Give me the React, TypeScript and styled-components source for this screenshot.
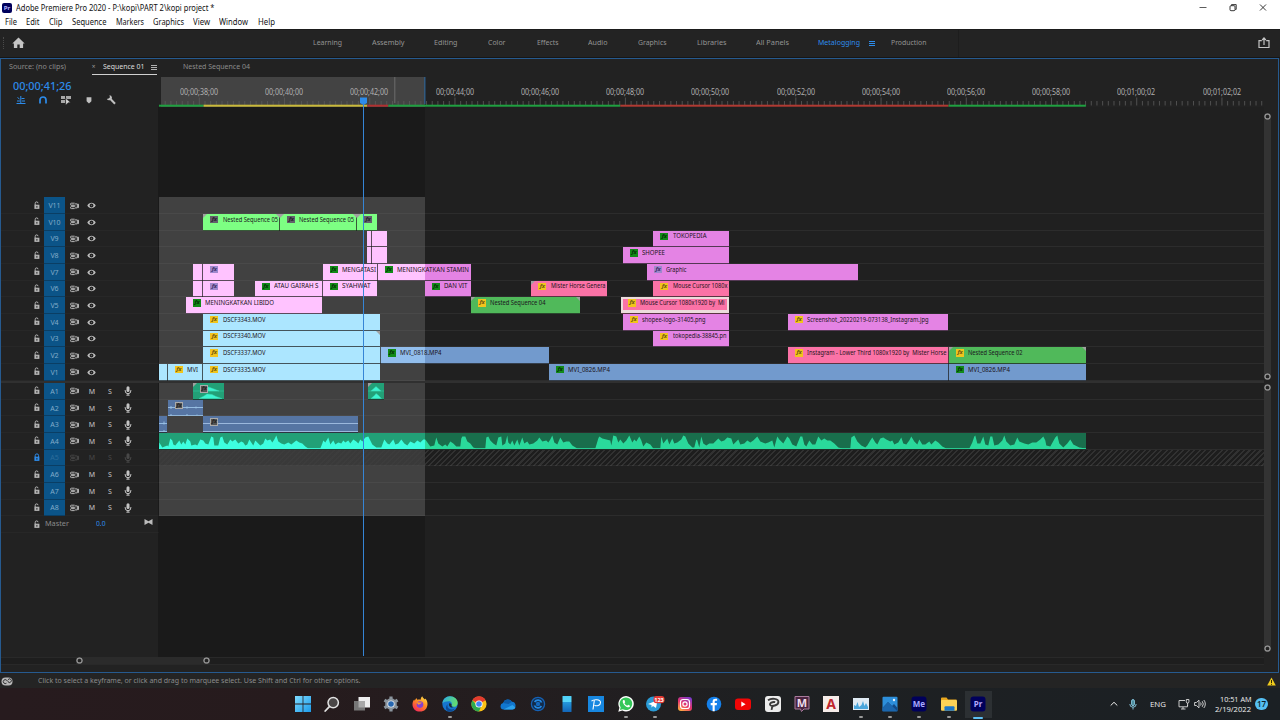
import React, { useLayoutEffect, useRef } from "react";
import styled, { createGlobalStyle } from "styled-components";

const GlobalStyle = createGlobalStyle`
  * { box-sizing: border-box; }
  body { margin: 0; background: #202020; overflow: hidden; }
  svg { display: block; flex: none; }
`;

const ORIGIN = 158.7;
const LANES_END = 1264;
const RANGE_END = 424.7;
const LANE_H = 16.667;

/* ---------- fitted text ---------- */

const FitBox = styled.span<{ $w: number }>`
  display: inline-block;
  width: ${(p) => p.$w}px;
  flex: none;
  white-space: pre;
`;
const FitText = styled.span`
  display: inline-block;
  transform-origin: 0 50%;
`;

/** One line of text, condensed or widened so that it takes `w` pixels. */
function Fit({ w, children }: { w: number; children: string }) {
  const ref = useRef<HTMLSpanElement>(null);
  useLayoutEffect(() => {
    const el = ref.current;
    if (!el) return;
    el.style.transform = "none";
    const natural = el.getBoundingClientRect().width;
    el.style.transform = `scaleX(${(w / natural).toFixed(4)})`;
  }, [w, children]);
  return <FitBox $w={w}><FitText ref={ref}>{children}</FitText></FitBox>;
}

/* ---------- frame ---------- */

const Screen = styled.div`
  width: 1280px;
  height: 720px;
  display: flex;
  flex-direction: column;
  overflow: hidden;
  background: #202020;
  font-family: "Noto Sans", "Open Sans", sans-serif;
  font-size: 7.5px;
  line-height: 1;
  color: #9a9a9a;
`;

const TitleBar = styled.header`
  height: 15px;
  flex: none;
  display: flex;
  align-items: center;
  background: #fff;
  color: #111;
  font-size: 8.5px;
  padding: 1px 13.5px 0 2px;
`;
const AppBadge = styled.span`
  width: 10px;
  height: 10px;
  margin: 0 3.7px 1px 0;
  border-radius: 2px;
  background: #00005b;
  color: #b9b9ff;
  font: bold 6px/10px "Noto Sans", sans-serif;
  text-align: center;
`;
const WindowButtons = styled.div`
  margin-left: auto;
  display: flex;
  align-items: center;
  gap: 22px;
`;
const MenuBar = styled.nav`
  height: 13.5px;
  flex: none;
  display: flex;
  align-items: center;
  background: #fff;
  color: #111;
  font-size: 8.2px;
  padding: 0 0 0 4.5px;
`;
const MenuItem = styled.span<{ $gap: number }>`
  margin-right: ${(p) => p.$gap}px;
`;

const WorkspaceBar = styled.div`
  height: 28px;
  flex: none;
  display: flex;
  align-items: center;
  background: #232323;
  border-top: 1px solid #1b1b1b;
  padding: 0 10px 0 3px;
  color: #939393;
  font-size: 7.8px;
`;
const Grip = styled.span`
  width: 2px;
  height: 12px;
  border-left: 1px dotted #4a4a4a;
  margin-right: 7px;
`;
const Workspaces = styled.div`
  display: flex;
  align-items: center;
  margin-left: 287.5px;
  height: 27px;
  padding-right: 32px;
  border-right: 1px solid #1d1d1d;
`;
const Workspace = styled.span<{ $gap: number; $on?: boolean }>`
  margin-right: ${(p) => p.$gap}px;
  color: ${(p) => (p.$on ? "#2d8ceb" : "inherit")};
`;
const Burger = styled.span<{ $color: string }>`
  width: 6px;
  height: 5px;
  flex: none;
  border-top: 1px solid ${(p) => p.$color};
  border-bottom: 1px solid ${(p) => p.$color};
  background: linear-gradient(${(p) => p.$color}, ${(p) => p.$color}) center / 100% 1px no-repeat;
`;
const Spread = styled.span`
  margin-left: 15.8px;
`;
const Push = styled.span`
  margin-left: auto;
`;
const Gutter = styled.div`
  height: 1.5px;
  flex: none;
  background: #161616;
`;

const Panel = styled.section`
  position: relative;
  height: 615px;
  flex: none;
  margin-right: 1px;
  border: 1px solid #265a8f;
  background: #222;
  display: flex;
  flex-direction: column;
`;
const Tabs = styled.div`
  height: 18px;
  flex: none;
  display: flex;
  color: #8b8b8b;
  font-size: 7.6px;
  padding-left: 8px;
`;
const Tab = styled.div<{ $on?: boolean; $ml?: number }>`
  height: 16px;
  display: flex;
  align-items: center;
  padding-top: 1px;
  margin-left: ${(p) => p.$ml ?? 0}px;
  color: ${(p) => (p.$on ? "#dcdcdc" : "inherit")};
  border-bottom: 1px solid ${(p) => (p.$on ? "#d0d0d0" : "transparent")};
`;
const TabClose = styled.span`
  width: 8.5px;
  margin-right: 2.5px;
  font-size: 6.5px;
  color: #999;
`;
const TabMenu = styled.span`
  display: flex;
  margin-left: 7px;
`;

const HeadRow = styled.div`
  height: 30px;
  flex: none;
  display: flex;
`;
const Tools = styled.div`
  width: 157.7px;
  flex: none;
  padding: 3.5px 0 0 11.5px;
`;
const Timecode = styled.div`
  color: #2d8ceb;
  font-size: 10.8px;
  font-weight: 500;
  height: 14px;
`;
const ToolIcons = styled.div`
  display: flex;
  align-items: center;
  gap: 12.7px;
  padding-left: 3px;
`;

const Ruler = styled.div`
  position: relative;
  width: ${LANES_END - ORIGIN}px;
  height: 30px;
  flex: none;
  overflow: hidden;
  background: linear-gradient(90deg, #222 2px, #434343 2px, #434343 266px, #222 266px);
`;
const RulerLabels = styled.div`
  display: flex;
  margin-left: -2.3px;
  padding-top: 11px;
  font-size: 8.2px;
  color: #b0b0b0;
`;
const RulerLabel = styled.span`
  width: 85.22px;
  flex: none;
  display: flex;
  justify-content: center;
`;
const RulerTicks = styled.svg`
  position: absolute;
  left: 0;
  top: 0;
`;

const Body = styled.div`
  display: flex;
  height: 549.5px;
  flex: none;
`;
const Main = styled.div`
  width: ${LANES_END - 1}px;
  display: flex;
  flex-direction: column;
  background: linear-gradient(90deg, #222 157px, #1a1a1a 157px, #1a1a1a 423.7px, #202020 423.7px);
`;
const Spacer = styled.div<{ $h: number }>`
  height: ${(p) => p.$h}px;
  flex: none;
`;
const Splitter = styled.div`
  height: 2.5px;
  flex: none;
  background: #303030;
`;

const Track = styled.div`
  height: ${LANE_H}px;
  flex: none;
  display: flex;
`;
const TrackHead = styled.div<{ $dim?: boolean }>`
  width: 157.7px;
  flex: none;
  display: flex;
  align-items: center;
  padding-left: 31.3px;
  border-bottom: 1px solid #272727;
  border-right: 1px solid #1a1a1a;
  color: ${(p) => (p.$dim ? "#484848" : "#c4c4c4")};
`;
const Target = styled.span`
  width: 21px;
  height: 100%;
  margin: 0 4.5px 0 2.7px;
  padding-top: 1px;
  background: #0b5488;
  color: #82acc9;
  box-shadow: 0 1px #0a3e64;
  font-size: 7px;
  display: flex;
  align-items: center;
  justify-content: center;
`;
const DimTarget = styled(Target)`
  color: #2b6c9a;
`;
const HeadCell = styled.span<{ $w: number }>`
  width: ${(p) => p.$w}px;
  padding-top: 1px;
  display: flex;
  justify-content: center;
  font-size: 7px;
`;
const Lane = styled.div<{ $hatch?: boolean }>`
  flex: 1;
  display: flex;
  min-width: 0;
  background: ${(p) =>
    p.$hatch
      ? `linear-gradient(90deg, rgba(62,62,62,.86) 266px, transparent 266px), repeating-linear-gradient(135deg, #1d1d1d 0 2.4px, #313131 2.4px 3.9px)`
      : `linear-gradient(90deg, #414141 266px, #202020 266px)`};
  box-shadow: inset 0 -1px rgba(128, 128, 128, 0.13);
`;

type Tone = "sky" | "pink" | "violet" | "rose" | "lime" | "green" | "blue" | "teal" | "slate";
const tones: Record<Tone, [string, string]> = {
  sky: ["#ace6ff", "#ace6ff"],
  pink: ["#ffc3ff", "#e483e4"],
  violet: ["#e483e4", "#e483e4"],
  rose: ["#fb72a6", "#fb72a6"],
  lime: ["#7dff83", "#7dff83"],
  green: ["#50b95a", "#50b95a"],
  blue: ["#92beed", "#729acd"],
  teal: ["#22a077", "#196e4c"],
  slate: ["#5675a3", "#5675a3"],
};

const ClipBox = styled.div<{ $w: number; $gap: number; $tone: Tone; $split: number; $sel?: boolean; $cut?: boolean }>`
  position: relative;
  width: ${(p) => p.$w}px;
  margin-left: ${(p) => p.$gap}px;
  height: 100%;
  flex: none;
  display: flex;
  align-items: flex-start;
  overflow: hidden;
  background: ${(p) =>
    `linear-gradient(90deg, ${tones[p.$tone][0]} ${p.$split}px, ${tones[p.$tone][1]} ${p.$split}px)`};
  box-shadow: inset 0 -1px rgba(28, 28, 28, 0.72)${(p) => (p.$cut ? ", inset -1px 0 rgba(28, 28, 28, 0.72)" : "")};
  color: #1b1420;
  font-size: 6.8px;
`;
const SelectFrame = styled.span`
  position: absolute;
  inset: 0 0 1px 0;
  border: 2px solid #ecdcdc;
  border-bottom-width: 3px;
`;
const ClipLabel = styled.span`
  display: flex;
  padding: 2px 0 0 7px;
`;
const Fx = styled.span<{ $c: string; $ink: string }>`
  position: relative;
  width: 8px;
  height: 7.5px;
  margin-right: 4.3px;
  flex: none;
  background: ${(p) => p.$c};
  color: ${(p) => p.$ink};
  font: italic bold 6px/7px "Noto Sans", sans-serif;
  text-align: center;
  letter-spacing: -0.3px;
`;
const ClipName = styled.span`
  padding-top: 0.7px;
  height: 9px;
  flex: none;
`;
const Corner = styled.span<{ $right?: boolean }>`
  position: absolute;
  top: 0;
  ${(p) => (p.$right ? "right: 0;" : "left: 0;")}
  border-top: 4px solid #a0a0a0;
  border-${(p) => (p.$right ? "left" : "right")}: 4px solid transparent;
`;
const AudioArt = styled.svg`
  position: absolute;
  left: 0;
  top: 0;
`;
const AudioFx = styled(Fx)`
  border: 1px solid #aaa;
  line-height: 5px;
`;

const MasterLabel = styled.span`
  width: 51px;
  margin-left: 3.7px;
  font-size: 7.8px;
  color: #8a8a8a;
`;
const MasterValue = styled.span`
  width: 48.5px;
  font-size: 7.6px;
  color: #2d8ceb;
`;

const Rail = styled.div`
  width: 7px;
  padding-top: 6px;
  display: flex;
  flex-direction: column;
  gap: 4px;
`;
const RailBar = styled.div<{ $h: number }>`
  height: ${(p) => p.$h}px;
  display: flex;
  flex-direction: column;
  justify-content: space-between;
  background: #333;
  border-radius: 4px;
`;
const KnobIcon = styled.svg`
  background: #222;
  border-radius: 50%;
`;
const ZoomRow = styled.div`
  height: 8px;
  flex: none;
  width: 1263px;
  background: #1e1e1e;
  border: solid #292929;
  border-width: 1px 0;
  padding-left: 74.5px;
  display: flex;
  align-items: center;
`;
const ZoomBar = styled.div`
  width: 134.5px;
  height: 7px;
  display: flex;
  justify-content: space-between;
  align-items: center;
  background: #2b2b2b;
`;
const Playhead = styled.svg`
  position: absolute;
  left: 358px;
  top: 36px;
`;

const StatusBar = styled.footer`
  height: 15px;
  flex: none;
  display: flex;
  align-items: center;
  background: #242424;
  color: #8b8b8b;
  font-size: 7.6px;
  padding: 1px 4px 0 1px;
`;
const StatusText = styled.span`
  margin-left: 25px;
`;

const Taskbar = styled.div`
  flex: 1;
  display: flex;
  align-items: center;
  background: linear-gradient(90deg, #271b1e 0, #261b1d 24%, #221e20 45%, #1e2022 60%, #1b2024 100%);
  padding-left: 288.2px;
`;
const Slot = styled.div<{ $active?: boolean }>`
  position: relative;
  width: 29.36px;
  height: 32px;
  display: flex;
  align-items: center;
  justify-content: center;
  ${(p) =>
    p.$active &&
    `background: linear-gradient(#2c3033, #2c3033) center / 27px 27px no-repeat;`}
`;
const RunMark = styled.span<{ $active?: boolean }>`
  position: absolute;
  bottom: ${(p) => (p.$active ? 1.5 : 2)}px;
  width: ${(p) => (p.$active ? 10 : 4)}px;
  height: 2px;
  border-radius: 1px;
  background: ${(p) => (p.$active ? "#5cc0f5" : "#9a9a9a")};
`;
const Tray = styled.div`
  margin-left: auto;
  padding-right: 12px;
  display: flex;
  align-items: center;
  color: #f0f0f0;
  font-family: "Open Sans", sans-serif;
  font-size: 8px;
`;
const TrayItem = styled.span<{ $mr: number }>`
  margin-right: ${(p) => p.$mr}px;
`;
const Clock = styled.div`
  display: flex;
  flex-direction: column;
  align-items: flex-end;
  gap: 2px;
  margin-right: 4px;
`;
const Count = styled.span`
  width: 13px;
  height: 11.5px;
  border-radius: 6px;
  background: #55bff2;
  color: #0b1c28;
  font-size: 8px;
  font-weight: 600;
  line-height: 11.5px;
  text-align: center;
`;

/* ---------- icons ---------- */

const Knob = () => (
  <KnobIcon width="7" height="7" viewBox="0 0 7 7">
    <circle cx="3.500" cy="3.500" r="2.600" fill="#222" stroke="#8f8f8f" strokeWidth="1.500" />
  </KnobIcon>
);
const LockIcon = ({ on }: { on?: boolean }) => (
  <svg width="9" height="9" viewBox="0 0 9 9">
    <path d={on ? "M3.2 4V2.6a1.7 1.7 0 0 1 3.4 0V4" : "M3.2 4V2.4a1.4 1.4 0 0 1 2.8-.2"} fill="none" stroke={on ? "#2d8ceb" : "#b5b5b5"} strokeWidth="1" />
    <rect x="2.4" y="3.7" width="5" height="4.2" fill={on ? "#2d8ceb" : "#b5b5b5"} />
    <rect x="4.4" y="4.9" width="1" height="1.8" fill="#222" />
  </svg>
);
const SyncIcon = () => (
  <svg width="9" height="8" viewBox="0 0 9 8" fill="none" stroke="currentColor" strokeWidth=".9">
    <path d="M4.700 1.200H1.400a.8.8 0 0 0 0 1.900h3.200M4.700 4.700H1.400a.8.8 0 0 0 0 1.900h3.300M.8 3.900h4.700M5 1.900h2.300v4H5M7.300 3l1.200-.8v3.400l-1.200-.8" />
  </svg>
);
const EyeIcon = () => (
  <svg width="9" height="7" viewBox="0 0 9 7">
    <path d="M.3 3.500C2.200-.2 6.800-.2 8.700 3.500 6.800 7.200 2.200 7.200.3 3.500z" fill="#bdbdbd" />
    <circle cx="4.500" cy="3.500" r="1.900" fill="#222" />
    <circle cx="4.500" cy="3.500" r=".6" fill="#6a6a6a" />
  </svg>
);
const MicIcon = () => (
  <svg width="8" height="10" viewBox="0 0 8 10">
    <rect x="2.500" y=".3" width="3" height="5.800" rx="1.500" fill="currentColor" />
    <path d="M1.200 4v.9a2.800 2.800 0 0 0 5.600 0V4M4 7.600V9M2.400 9.200h3.200" fill="none" stroke="currentColor" strokeWidth="1" />
  </svg>
);
const Chip = ({ bg, ink, text }: { bg: string; ink: string; text: string }) => (
  <svg width="16" height="16" viewBox="0 0 16 16">
    <rect x=".5" y=".5" width="15" height="15" rx="3" fill={bg} />
    <text x="8" y="11.2" fontSize="8" fontWeight="700" fontFamily="Noto Sans, sans-serif" textAnchor="middle" fill={ink}>{text}</text>
  </svg>
);
const I = ({ children }: { children: React.ReactNode }) => (
  <svg width="16" height="16" viewBox="0 0 16 16">{children}</svg>
);

const taskIcons: { art: React.ReactNode; run?: boolean; active?: boolean }[] = [
  { art: <I><defs><linearGradient id="win" x1="0" y1="0" x2="1" y2="1"><stop offset="0" stopColor="#7fdcff" /><stop offset="1" stopColor="#1c9bea" /></linearGradient></defs><path d="M0 0h7.6v7.6H0zM8.4 0H16v7.6H8.4zM0 8.4h7.6V16H0zM8.4 8.4H16V16H8.4z" fill="url(#win)" /></I> },
  { art: <I><circle cx="9.2" cy="6.6" r="5.2" fill="#4a4646" stroke="#e2e2e2" strokeWidth="1.5" /><path d="M5.4 10.6L1.2 15" stroke="#e2e2e2" strokeWidth="1.8" strokeLinecap="round" /></I> },
  { art: <I><rect x="4.5" y="1" width="11.5" height="10.5" fill="#eee" /><rect x="0" y="5" width="11" height="9.5" fill="#777" /><path d="M4.5 5H11v6.5H4.5z" fill="#a9a9a9" /></I> },
  { art: <I><circle cx="8" cy="8" r="5.8" fill="#8b959e" /><g stroke="#8b959e" strokeWidth="3.2"><path d="M8 .4v15.2M1.4 4.2l13.2 7.6M14.6 4.2L1.4 11.8" /></g><circle cx="8" cy="8" r="3.6" fill="#e8eef4" /><circle cx="8" cy="8" r="2.8" fill="#2566b0" /></I> },
  { art: <I><defs><linearGradient id="fox" x1=".8" y1="0" x2=".2" y2="1"><stop offset="0" stopColor="#ffe04a" /><stop offset=".45" stopColor="#ff8a22" /><stop offset="1" stopColor="#f5245c" /></linearGradient></defs><path d="M8 15.6C3.6 15.6.5 12.500.5 8.400c0-2 .6-3.800 1.700-5l.5 1.400L4.300 2l1 1.700C6.500 3.300 8 3.300 8.700 3.700 8.700 2.200 9.200 1 10.300.2c.3 1.500 1.500 2.100 2.700 3.300l.4-1c1.400 1.500 2.100 3.400 2.100 5.500 0 4.500-3.100 7.600-7.500 7.600z" fill="url(#fox)" /><circle cx="8" cy="8.600" r="3.300" fill="#8540d0" /><path d="M4.500 6.500c2-.9 3.500.3 5.500 0-1 1-1.800 1.800-3.500 2.300z" fill="#ff9b2c" /></I> },
  { art: <I><defs><linearGradient id="edg" x1="0" y1="0" x2="1" y2=".3"><stop offset="0" stopColor="#2aa9e8" /><stop offset="1" stopColor="#62dc72" /></linearGradient></defs><circle cx="8" cy="8" r="7.700" fill="#1676cf" /><path d="M.4 7.500C.8 3.300 4 .3 8 .3c4.400 0 7.700 3 7.700 6.600 0 2.400-1.700 3.900-3.800 3.900-2 0-2.700-.8-2.300-1.700.9-1.800-.4-3.800-2.900-3.800C3.900 5.300 1.500 6 .4 7.500z" fill="url(#edg)" /><path d="M5.600 8.300c-1 4 2.500 6.300 7.400 4.400-2 2.400-4.500 3-6.400 2.900C3.500 14.400 3 10.600 5.600 8.300z" fill="#0c4a95" /><path d="M7.200 7.300c1.500-.3 2.900.9 2.300 2.300-.3.800.8 1.500 2.300 1.500-2.600 1.300-5.800-.6-4.600-3.800z" fill="#1c2a35" /></I>, run: true },
  { art: <I><circle cx="8" cy="8" r="7.600" fill="#fbc116" /><path d="M8 8L1.400 4.200A7.600 7.600 0 0 1 14.600 4.200z" fill="#e33b2e" /><path d="M1.400 4.200A7.600 7.600 0 0 0 8 15.600L10.500 9.500 8 8 4.700 8z" fill="#2da94f" /><circle cx="8" cy="8" r="3.600" fill="#fff" /><circle cx="8" cy="8" r="2.800" fill="#4285f4" /></I> },
  { art: <I><path d="M3.500 13.500a3.300 3.300 0 0 1-.4-6.500A5 5 0 0 1 12 5.800a3.900 3.900 0 0 1 .5 7.700z" fill="#1177cf" /><path d="M3.100 7A5 5 0 0 1 12 5.800L8.500 8z" fill="#0c5ba9" /><path d="M3.500 13.500l9-4.500 2.900 2.500c-.5 1.300-1.500 2-2.900 2z" fill="#2ba2ed" /></I> },
  { art: <I><circle cx="8" cy="8" r="6.600" fill="#132b49" stroke="#1561b4" strokeWidth="1.300" /><path d="M4.600 6A3.900 3.900 0 0 1 11.600 6.500M11.400 10A3.900 3.900 0 0 1 4.400 9.500" fill="none" stroke="#2488e0" strokeWidth="1.700" /><circle cx="8" cy="8" r="2.200" fill="#1468bd" /></I> },
  { art: <I><defs><linearGradient id="ph" x1="0" y1="0" x2="0" y2="1"><stop offset="0" stopColor="#4fd0f8" /><stop offset=".38" stopColor="#58d8fa" /><stop offset=".4" stopColor="#2598dc" /><stop offset="1" stopColor="#1265b8" /></linearGradient></defs><rect x="3.500" y="0" width="9" height="16" rx=".6" fill="url(#ph)" /></I> },
  { art: <I><path d="M0 0h16v16H0z" fill="#1787e0" /><path d="M3.500 5.200c2-2 9-2.200 9 1.300 0 3-4 4-6 2.700M6.300 4.500L5 13.500" fill="none" stroke="#fff" strokeWidth="1.100" /></I> },
  { art: <I><path d="M.3 15.700l1.100-4A7.700 7.700 0 1 1 4.400 14.600z" fill="#fff" /><path d="M1.900 14.100l.8-2.800a6.300 6.300 0 1 1 2.200 2z" fill="#34c759" /><path d="M5.500 4c-.9.700-1 1.900-.3 3.200 1 2 2.500 3.400 4.400 4 1.200.3 2.300-.3 2.400-1.500L10.200 8.700l-1 1C8 9.300 7 8.300 6.400 7.200l.8-.9L6.400 4z" fill="#fff" /></I>, run: true },
  { art: <svg width="20" height="16" viewBox="-.5 0 20 16"><circle cx="8" cy="8" r="7.500" fill="#2a9bd6" /><path d="M2.500 8L12 4.200 10.500 12 7.500 10 6 11.500V9z" fill="#fff" /><rect x="8" y="0" width="11" height="7.300" rx="3" fill="#e53a34" /><text x="13.500" y="5.700" fontSize="5.600" fontWeight="700" textAnchor="middle" fill="#fff" fontFamily="Noto Sans, sans-serif">123</text></svg>, run: true },
  { art: <I><defs><linearGradient id="ig" x1=".2" y1="1" x2=".8" y2="0"><stop offset="0" stopColor="#fdb040" /><stop offset=".45" stopColor="#e8336a" /><stop offset="1" stopColor="#7a3bd0" /></linearGradient></defs><rect x="1" y="1" width="14" height="14" rx="3" fill="url(#ig)" /><rect x="3.500" y="3.500" width="9" height="9" rx="2.500" fill="none" stroke="#fff" strokeWidth="1.200" /><circle cx="8" cy="8" r="2.100" fill="none" stroke="#fff" strokeWidth="1.200" /></I> },
  { art: <I><circle cx="8" cy="8" r="7.300" fill="#1580ea" /><path d="M8.700 15.200V9.300h2l.3-2.200H8.700V5.900c0-.8.300-1.200 1.200-1.200h1.200V2.800C9 2.400 6.600 2.600 6.600 5.400v1.700H4.700v2.200h1.900v5.900z" fill="#fff" /></I> },
  { art: <I><rect x="0" y="2.500" width="16" height="11.500" rx="3" fill="#f10606" /><path d="M6.300 5.600l4.300 2.600-4.300 2.600z" fill="#fff" /></I> },
  { art: <I><rect x="0" y="0" width="16" height="16" rx="3" fill="#ececec" /><path d="M3 4.200C6.500 2 13.400 2.300 13.400 6c0 3.500-6.700 4.800-8.200 3-1-1.700 2.300-3.500 5-2.800M8.500 9.500c-1.500 1.200-2 2.500-1.800 4.300" fill="none" stroke="#3a3a3a" strokeWidth="1.900" /></I> },
  { art: <svg width="16" height="16" viewBox="0 0 16 16"><path d="M1 .5h14v12.500H10L7.500 15.500 6.500 13H1z" fill="#4a2440" stroke="#a87a9c" strokeWidth="1" /><text x="8" y="10.700" fontSize="11" fontWeight="700" textAnchor="middle" fill="#f0dcea" fontFamily="Noto Sans, sans-serif">M</text></svg> },
  { art: <svg width="16" height="16" viewBox="0 0 16 16"><path d="M0 0h16v16H0z" fill="#f6ece9" /><text x="8" y="13.200" fontSize="14" fontWeight="700" textAnchor="middle" fill="#c0262d" fontFamily="Noto Sans, sans-serif">A</text></svg> },
  { art: <I><rect x="0" y="2" width="16" height="12" fill="#dfeaf3" /><path d="M1 13V9l2 1 1.500-4 1.500 5 2.500-2 1.500-4 1.500 5 1.500-3 2 4v2z" fill="#4aa6dc" /></I>, run: true },
  { art: <I><rect x=".5" y=".8" width="15" height="14.500" rx="1" fill="#2d8fdb" /><path d="M.5 12L6 6l4 4 2-2 3.500 4v3.300H.5z" fill="#134a86" /><path d="M6 6l9.500 9.300H.5V12z" fill="#1b66ad" /><circle cx="12" cy="4" r="1.200" fill="#e8f5ff" /></I>, run: true },
  { art: <Chip bg="#00005b" ink="#a9a9ff" text="Me" />, run: true },
  { art: <I><path d="M0 2.500A1 1 0 0 1 1 1.500h4.500L7 3.500h8.500V8H0z" fill="#e9a820" /><rect x="0" y="4" width="16" height="10.800" rx="1" fill="#fdd356" /><path d="M3.500 14.800v-3.500a1 1 0 0 1 1-1h8a1 1 0 0 1 1 1v3.500z" fill="#1c77c7" /></I>, run: true },
  { art: <Chip bg="#00005b" ink="#b2a9ff" text="Pr" />, active: true },
];

/* ---------- data ---------- */

type FxKind = "yellow" | "green" | "purple" | "gray";
const fxColors: Record<FxKind, [string, string]> = {
  yellow: ["#f2c41d", "#6a5510"],
  green: ["#128a18", "#042e06"],
  purple: ["#a088cc", "#3b2c66"],
  gray: ["#63606a", "#211f26"],
};
interface ClipData {
  a: number;
  b: number;
  t: Tone;
  fx?: FxKind;
  name?: string;
  w?: number;
  sel?: boolean;
  cl?: boolean;
  cr?: boolean;
}
const cam = (name: string, cr = false): ClipData => ({ a: 203.3, b: 380, t: "sky", fx: "yellow", name, w: 42.5, cr });

const video: { id: string; clips: ClipData[] }[] = [
  { id: "V11", clips: [] },
  { id: "V10", clips: [
    { a: 203.3, b: 279.6, t: "lime", fx: "gray", name: "Nested Sequence 05", w: 55, cl: true, cr: true },
    { a: 280.2, b: 356.5, t: "lime", fx: "gray", name: "Nested Sequence 05", w: 55, cl: true, cr: true },
    { a: 357, b: 377.3, t: "lime", fx: "gray", cl: true },
  ] },
  { id: "V9", clips: [
    { a: 366.7, b: 371.3, t: "pink" }, { a: 372, b: 387.3, t: "pink" },
    { a: 653.3, b: 729.3, t: "violet", fx: "green", name: "TOKOPEDIA", w: 33.5 },
  ] },
  { id: "V8", clips: [
    { a: 366.7, b: 371.3, t: "pink" }, { a: 372, b: 387.3, t: "pink" },
    { a: 623, b: 729.3, t: "violet", fx: "green", name: "SHOPEE", w: 23 },
  ] },
  { id: "V7", clips: [
    { a: 193.3, b: 202.6, t: "pink" }, { a: 203.3, b: 234, t: "pink", fx: "purple" },
    { a: 322.7, b: 377.3, t: "pink", fx: "green", name: "MENGATASI", w: 34 },
    { a: 378, b: 471, t: "pink", fx: "green", name: "MENINGKATKAN STAMIN", w: 72 },
    { a: 647, b: 858, t: "violet", fx: "purple", name: "Graphic", w: 20.5 },
  ] },
  { id: "V6", clips: [
    { a: 193.3, b: 202.6, t: "pink" }, { a: 203.3, b: 234, t: "pink", fx: "purple" },
    { a: 254.7, b: 322, t: "pink", fx: "green", name: "ATAU GAIRAH S", w: 44.5 },
    { a: 322.7, b: 377.3, t: "pink", fx: "green", name: "SYAHWAT", w: 28.5 },
    { a: 424.7, b: 471, t: "violet", fx: "green", name: "DAN VIT", w: 23.5 },
    { a: 531.3, b: 607.3, t: "rose", fx: "yellow", name: "Mister Horse Genera", w: 54.5, cl: true },
    { a: 653.3, b: 729.3, t: "rose", fx: "yellow", name: "Mouse Cursor 1080x", w: 54.5 },
  ] },
  { id: "V5", clips: [
    { a: 186, b: 322, t: "pink", fx: "green", name: "MENINGKATKAN LIBIDO", w: 69 },
    { a: 471, b: 580, t: "green", fx: "yellow", name: "Nested Sequence 04", w: 55.5, cl: true, cr: true },
    { a: 621, b: 729.3, t: "rose", fx: "yellow", name: "Mouse Cursor 1080x1920 by  Mi", w: 84.5, sel: true },
  ] },
  { id: "V4", clips: [
    cam("DSCF3343.MOV"),
    { a: 623, b: 729.3, t: "violet", fx: "yellow", name: "shopee-logo-31405.png", w: 63.5 },
    { a: 788, b: 948, t: "violet", fx: "yellow", name: "Screenshot_20220219-073138_Instagram.jpg", w: 121.5 },
  ] },
  { id: "V3", clips: [
    cam("DSCF3340.MOV", true),
    { a: 653.3, b: 729.3, t: "violet", fx: "yellow", name: "tokopedia-38845.pn", w: 53.5 },
  ] },
  { id: "V2", clips: [
    cam("DSCF3337.MOV"),
    { a: 380.7, b: 548.7, t: "blue", fx: "green", name: "MVI_0818.MP4", w: 41.5 },
    { a: 788, b: 948.3, t: "rose", fx: "yellow", name: "Instagram - Lower Third 1080x1920 by  Mister Horse", w: 139.5 },
    { a: 949, b: 1085.6, t: "green", fx: "yellow", name: "Nested Sequence 02", w: 54.5, cl: true, cr: true },
  ] },
  { id: "V1", clips: [
    { a: 158.7, b: 167, t: "sky" },
    { a: 167.7, b: 202.6, t: "sky", fx: "yellow", name: "MVI", w: 11 },
    cam("DSCF3335.MOV"),
    { a: 549, b: 948.3, t: "blue", fx: "green", name: "MVI_0826.MP4", w: 42 },
    { a: 949, b: 1085.6, t: "blue", fx: "green", name: "MVI_0826.MP4", w: 42 },
  ] },
];

const wave =
  "159,6 162,1 167,3 168,2 170,10 172,8 173,4 175,3 179,8 181,4 183,7 185,4 187,10 190,7 191,3 195,4 197,3 200,9 203,8 205,5 208,4 211,12 213,11 214,3 218,3 220,11 222,12 224,6 227,4 230,9 232,7 235,9 238,5 241,7 243,6 245,3 247,4 249,9 251,6 253,3 255,8 257,6 260,3 263,5 265,10 267,8 270,9 272,6 274,9 276,13 278,7 281,5 284,4 288,6 291,4 296,8 299,6 302,5 305,2 308,0 320,0 322,5 323,8 325,6 328,11 330,4 333,8 335,4 338,6 341,5 343,8 345,6 348,8 350,5 353,9 356,7 358,5 360,9 362,7 365,11 368,12 370,8 372,4 376,1 381,1 384,9 387,5 389,4 393,9 395,4 398,5 401,9 404,5 407,3 410,7 414,5 417,8 420,6 423,9 425,9 430,2 434,3 436,11 438,5 442,2 445,4 447,2 450,7 453,5 456,2 460,2 461,10 462,12 465,12 467,7 470,5 473,1 476,0 485,0 486,11 488,12 490,8 493,5 496,3 498,11 501,12 502,3 505,5 507,13 508,6 510,4 512,8 514,3 517,9 519,3 522,11 524,5 527,7 529,4 533,5 537,8 539,11 542,7 546,8 548,6 550,9 552,13 554,6 557,4 560,11 563,6 566,7 569,7 572,3 577,0 595,0 598,10 599,12 602,10 606,9 610,8 611,3 613,13 616,12 618,6 620,9 623,5 626,8 629,13 632,6 634,9 636,7 639,12 641,8 643,2 646,6 650,4 653,0 660,0 661,12 663,5 667,10 669,4 672,10 674,5 677,6 681,9 683,13 685,12 688,5 692,1 694,1 696,9 697,8 699,1 701,12 703,5 706,3 709,5 713,5 716,8 718,10 721,7 724,8 727,11 731,10 733,4 738,9 740,4 744,5 747,8 750,6 753,8 757,12 760,7 765,5 768,6 772,8 774,1 777,12 779,9 783,5 787,12 789,10 792,4 796,2 800,12 802,12 804,4 806,2 809,8 812,4 815,4 818,12 821,8 824,10 827,8 830,8 834,5 838,1 842,0 850,0 851,11 854,13 857,7 861,3 865,1 867,3 870,8 872,11 875,6 877,4 880,10 883,11 886,9 890,7 892,8 894,4 898,6 901,11 903,5 906,4 909,8 911,12 914,7 917,4 919,9 922,4 925,4 929,7 931,4 935,8 938,6 942,2 946,0 969,0 972,6 974,12 975,13 977,5 980,5 983,12 985,4 988,3 990,12 992,12 994,3 998,4 1002,8 1004,13 1006,7 1010,3 1014,4 1017,11 1019,7 1024,5 1028,4 1032,6 1036,6 1040,9 1043,12 1045,8 1046,3 1050,2 1055,11 1057,13 1059,5 1063,1 1067,5 1070,9 1073,4 1079,1";
const wavePoints = wave
  .split(" ")
  .map((p) => p.split(",").map(Number))
  .map(([x, h]) => `${(x - ORIGIN).toFixed(1)},${15.6 - h}`)
  .join(" ");

interface AudioClip {
  a: number;
  b: number;
  t: Tone;
  fx?: boolean;
  corner?: boolean;
  art: React.ReactNode;
}
const audio: { id: string; locked?: boolean; clips: AudioClip[] }[] = [
  { id: "A1", clips: [
    { a: 193.3, b: 224, t: "teal", fx: true, corner: true, art: <path d="M0 8h31M11 8V3l6 1.500 4 1.500 5 2zM6 15.500l5-2.500 3-2 5 .5 4 2 6 2z" fill="#3cf5d0" stroke="#3cd8b8" strokeWidth=".4" /> },
    { a: 368, b: 384, t: "teal", corner: true, art: <path d="M0 8h16M3 8l5-4.500L13 8zM3 15.500l4-3.500 1-1.500 2 1.500 3.500 3.500z" fill="#3cf5d0" stroke="#3cd8b8" strokeWidth=".4" /> },
  ] },
  { id: "A2", clips: [
    { a: 168, b: 202.6, t: "slate", fx: true, art: <path d="M0 7.500h35M3 6v3M19 6.300v2.400M28 6.500v2M0 15.500h35M3 14v2M19 14v2M29 14.500v1" stroke="#9cc4e8" strokeWidth=".9" fill="none" /> },
  ] },
  { id: "A3", clips: [
    { a: 158.7, b: 167, t: "slate", art: <path d="M0 7.500h9M5 5.500v3M0 15.500h9M5 14v2" stroke="#9cc4e8" strokeWidth=".9" /> },
    { a: 203.3, b: 358.5, t: "slate", fx: true, art: <path d="M0 7.500h156M0 15.500h156" stroke="#a3bfe3" strokeWidth=".9" /> },
  ] },
  { id: "A4", clips: [
    { a: 158.7, b: 1085.6, t: "teal", art: (
      <>
        <defs>
          <linearGradient id="waveFill" gradientUnits="userSpaceOnUse" x1="0" y1="0" x2="927" y2="0">
            <stop offset="0.287" stopColor="#3dffdf" />
            <stop offset="0.287" stopColor="#2ad99b" />
          </linearGradient>
        </defs>
        <polygon points={`0,16 ${wavePoints} 927,15.600 927,16`} fill="url(#waveFill)" />
        <rect x="0" y="15" width="927" height="1" fill="url(#waveFill)" opacity=".7" />
      </>
    ) },
  ] },
  { id: "A5", locked: true, clips: [] },
  { id: "A6", clips: [] },
  { id: "A7", clips: [] },
  { id: "A8", clips: [] },
];

const times = ["00;00;38;00", "00;00;40;00", "00;00;42;00", "00;00;44;00", "00;00;46;00", "00;00;48;00", "00;00;50;00", "00;00;52;00", "00;00;54;00", "00;00;56;00", "00;00;58;00", "00;01;00;02", "00;01;02;02"];
const renderBar: [number, number, string][] = [
  [158.7, 203.3, "#1fa040"], [203.3, 367, "#c9b93a"], [367, 388, "#b03030"],
  [388, 620, "#1fa040"], [620, 948.3, "#b03a32"], [948.3, 1085.6, "#1fa040"],
];
const menus: [string, number, number][] = [
  ["File", 12, 9.5], ["Edit", 13.5, 9.5], ["Clip", 13.5, 9.5], ["Sequence", 34.5, 9], ["Markers", 28, 9.5],
  ["Graphics", 31, 9], ["View", 17, 9], ["Window", 29, 9.500], ["Help", 17, 0],
];
const spaces: [string, number, number][] = [
  ["Learning", 29, 30.3], ["Assembly", 32.5, 29.5], ["Editing", 23.5, 30.5], ["Color", 17.5, 31.3],
  ["Effects", 21.5, 30.3], ["Audio", 19.5, 30], ["Graphics", 28.5, 30.3], ["Libraries", 29.5, 29.5],
  ["All Panels", 33, 29.700], ["Metalogging", 42, 8.800],
];

/* ---------- parts ---------- */

/** Places clips one after another; clips that touch share a cut line. */
function layClips<T extends { a: number; b: number }>(clips: T[]) {
  let end = ORIGIN;
  return clips.map((c, i) => {
    const next = clips[i + 1];
    const cut = !!next && next.a - c.b < 1;
    const right = cut ? next.a : c.b;
    const placed = { c, cut, gap: c.a - end, w: right - c.a };
    end = right;
    return placed;
  });
}
const splitOf = (c: { a: number }) => Math.max(0, RANGE_END - c.a);

function VideoTrack({ id, clips }: { id: string; clips: ClipData[] }) {
  return (
    <Track>
      <TrackHead>
        <LockIcon />
        <Target>{id}</Target>
        <HeadCell $w={10}><SyncIcon /></HeadCell>
        <HeadCell $w={25}><EyeIcon /></HeadCell>
      </TrackHead>
      <Lane>
        {layClips(clips).map(({ c, cut, gap, w }, i) => (
          <ClipBox key={i} $w={w} $gap={gap} $tone={c.t} $split={splitOf(c)} $cut={cut}>
            {c.sel && <SelectFrame />}
            {c.cl && <Corner />}
            {c.cr && <Corner $right />}
            {c.fx && (
              <ClipLabel>
                <Fx $c={fxColors[c.fx][0]} $ink={fxColors[c.fx][1]}>fx</Fx>
                {c.name && <ClipName><Fit w={c.w ?? 40}>{c.name}</Fit></ClipName>}
              </ClipLabel>
            )}
          </ClipBox>
        ))}
      </Lane>
    </Track>
  );
}

function AudioTrack({ id, locked, clips }: { id: string; locked?: boolean; clips: AudioClip[] }) {
  const T = locked ? DimTarget : Target;
  return (
    <Track>
      <TrackHead $dim={locked}>
        <LockIcon on={locked} />
        <T>{id}</T>
        <HeadCell $w={10}><SyncIcon /></HeadCell>
        <HeadCell $w={25}>M</HeadCell>
        <HeadCell $w={11}>S</HeadCell>
        <HeadCell $w={25}><MicIcon /></HeadCell>
      </TrackHead>
      <Lane $hatch={locked}>
        {layClips(clips).map(({ c, cut, gap, w }, i) => (
          <ClipBox key={i} $w={w} $gap={gap} $tone={c.t} $split={splitOf(c)} $cut={cut}>
            <AudioArt width={w} height="16">{c.art}</AudioArt>
            {c.corner && <Corner />}
            {c.fx && <ClipLabel><AudioFx $c="#555" $ink="#222">fx</AudioFx></ClipLabel>}
          </ClipBox>
        ))}
      </Lane>
    </Track>
  );
}

function TimeRuler() {
  const ticks = [];
  for (let i = -7; i < 188; i++) {
    const x = 199 - ORIGIN + (i * 85.22) / 15;
    if (x < 2 || x > 1103) continue;
    ticks.push(<path key={i} d={`M${x.toFixed(2)} ${i % 15 === 0 ? 20.5 : 24}V28.500`} />);
  }
  return (
    <Ruler>
      <RulerLabels>
        {times.map((t) => <RulerLabel key={t}><Fit w={38}>{t}</Fit></RulerLabel>)}
      </RulerLabels>
      <RulerTicks width="1105" height="30">
        <g stroke="#5c5c5c" strokeWidth=".8">{ticks}</g>
        {renderBar.map(([a, b, c]) => <rect key={a} x={a - ORIGIN} y="27.700" width={b - a} height="2" fill={c} />)}
        <path d="M235.800 0v26" stroke="#777" strokeWidth=".8" />
        <path d="M265.900 0v27" stroke="#2a6aa5" strokeWidth="1" />
      </RulerTicks>
    </Ruler>
  );
}

export default function App() {
  return (
    <>
      <GlobalStyle />
      <Screen>
        <TitleBar>
          <AppBadge>Pr</AppBadge>
          <Fit w={198.5}>{"Adobe Premiere Pro 2020 - P:\\kopi\\PART 2\\kopi project *"}</Fit>
          <WindowButtons>
            <svg width="8" height="8"><path d="M.5 3.500h7" stroke="#333" strokeWidth=".8" /></svg>
            <svg width="8" height="8" fill="none" stroke="#222" strokeWidth=".9"><rect x="1" y="1.700" width="5" height="5" rx="1" /><path d="M2.500 1.600V.6h4.700v4.800H6.200" /></svg>
            <svg width="8" height="8"><path d="M1 .5l6 6M7 .5L1 6.500" stroke="#222" strokeWidth=".9" /></svg>
          </WindowButtons>
        </TitleBar>
        <MenuBar>
          {menus.map(([t, w, g]) => <MenuItem key={t} $gap={g}><Fit w={w}>{t}</Fit></MenuItem>)}
        </MenuBar>
        <WorkspaceBar>
          <Grip />
          <svg width="13" height="12" viewBox="0 0 13 12"><path d="M6.500.5L.3 6.600h1.600V11h3.400V7.500h2.400V11h3.400V6.600h1.600z" fill="#c4c4c4" /></svg>
          <Workspaces>
            {spaces.map(([t, w, g]) => (
              <Workspace key={t} $gap={g} $on={t === "Metalogging"}><Fit w={w}>{t}</Fit></Workspace>
            ))}
            <Burger $color="#2d8ceb" />
            <Workspace $gap={0}><Spread><Fit w={35.500}>Production</Fit></Spread></Workspace>
          </Workspaces>
          <Push />
          <svg width="12" height="12" viewBox="0 0 12 12" fill="none" stroke="#c4c4c4" strokeWidth="1.200"><path d="M3.800 3.700H1v6.800h10V3.700H8.200M6 8V1.500M4.200 3L6 1l1.800 2" /></svg>
        </WorkspaceBar>
        <Gutter />
        <Panel>
          <Tabs>
            <Tab><Fit w={57}>Source: (no clips)</Fit></Tab>
            <Tab $on $ml={25.800}>
              <TabClose>×</TabClose>
              <Fit w={41.500}>Sequence 01</Fit>
              <TabMenu><Burger $color="#b0b0b0" /></TabMenu>
            </Tab>
            <Tab $ml={25.500}><Fit w={67}>Nested Sequence 04</Fit></Tab>
          </Tabs>
          <HeadRow>
            <Tools>
              <Timecode><Fit w={58.500}>00;00;41;26</Fit></Timecode>
              <ToolIcons>
                <svg width="10" height="10" viewBox="0 0 10 10" stroke="#2d8ceb" fill="none" strokeWidth="1"><path d="M.5 8.500h9M1 6h3M6 6h3M5.500 3.500h3M4.800 1v7M1.500 2.500l2 1.500" /></svg>
                <svg width="10" height="10" viewBox="0 0 10 10" stroke="#2d8ceb" fill="none" strokeWidth="1.700"><path d="M2 8.500V5a3 3 0 0 1 6 0v3.500" /></svg>
                <svg width="10" height="10" viewBox="0 0 10 10"><path d="M0 1h4v3H0zM5 1h5v3H5zM0 5h4v3H0z" fill="#a8a8a8" /><path d="M4.500 3l5 4.500-2.300.2L4.800 10z" fill="#d8d8d8" stroke="#222" strokeWidth=".5" /></svg>
                <svg width="10" height="10" viewBox="0 0 10 10"><path d="M2.600 2.200h4.800v4L5 8.600 2.600 6.200z" fill="#c0c0c0" /></svg>
                <svg width="10" height="10" viewBox="0 0 10 10"><path d="M4.500 4L9 8.800" stroke="#c0c0c0" strokeWidth="2" /><path d="M.8 3.900A2.800 2.800 0 0 0 6 2.500 2.800 2.800 0 0 0 3.400.3L4 2.200 2.600 3.400z" fill="#c0c0c0" /></svg>
              </ToolIcons>
            </Tools>
            <TimeRuler />
          </HeadRow>
          <Body>
            <Main>
              <Spacer $h={90.300} />
              {video.map((t) => <VideoTrack key={t.id} {...t} />)}
              <Splitter />
              {audio.map((t) => <AudioTrack key={t.id} {...t} />)}
              <Track>
                <TrackHead>
                  <LockIcon />
                  <MasterLabel><Fit w={24}>Master</Fit></MasterLabel>
                  <MasterValue><Fit w={9.500}>0.0</Fit></MasterValue>
                  <svg width="9" height="11" viewBox="0 0 9 11"><path d="M.5 0v6l4-2.300 4 2.300V0l-4 2.300z" fill="#bbb" /></svg>
                </TrackHead>
              </Track>
            </Main>
            <Rail>
              <RailBar $h={267}><Knob /><Knob /></RailBar>
              <RailBar $h={268}><Knob /><Knob /></RailBar>
            </Rail>
          </Body>
          <ZoomRow>
            <ZoomBar><Knob /><Knob /></ZoomBar>
          </ZoomRow>
          <Playhead width="10" height="562">
            <path d="M1 2.500h7v5.500L4.500 10 1 8z" fill="#2d8ceb" />
            <rect x="4" y="8" width="1" height="553" fill="#3585d6" />
          </Playhead>
        </Panel>
        <StatusBar>
          <svg width="12" height="9" viewBox="0 0 12 9"><rect x=".5" y=".5" width="11" height="8" rx="4" fill="#b8b8b8" /><path d="M5.500 6.200A2 2 0 1 1 5.500 3L7 4.600a1.800 1.800 0 1 0 0-1.800" fill="none" stroke="#242424" strokeWidth=".9" /></svg>
          <StatusText><Fit w={322.500}>Click to select a keyframe, or click and drag to marquee select. Use Shift and Ctrl for other options.</Fit></StatusText>
          <Push />
          <svg width="9" height="9" viewBox="0 0 9 9"><path d="M4.500.5l4.300 8H.2z" fill="#f0cb1c" /><path d="M4.500 3v3M4.500 6.800v1" stroke="#332b00" strokeWidth="1" /></svg>
        </StatusBar>
        <Taskbar>
          {taskIcons.map((t, i) => (
            <Slot key={i} $active={t.active}>
              {t.art}
              {(t.run || t.active) && <RunMark $active={t.active} />}
            </Slot>
          ))}
          <Tray>
            <TrayItem $mr={11}><svg width="8" height="8" viewBox="0 0 8 8"><path d="M.7 5.500L4 2.300l3.300 3.200" fill="none" stroke="#eee" strokeWidth="1" /></svg></TrayItem>
            <TrayItem $mr={13.500}><svg width="8" height="11" viewBox="0 0 8 11" fill="none" stroke="#8fd0e8" strokeWidth=".9"><rect x="2.600" y=".6" width="2.800" height="6" rx="1.400" fill="#4a8a9c" /><path d="M.8 5a3.200 3.200 0 0 0 6.400 0M4 8.200v2.300" /></svg></TrayItem>
            <TrayItem $mr={12}><Fit w={16}>ENG</Fit></TrayItem>
            <TrayItem $mr={4}><svg width="12" height="11" viewBox="0 0 12 11" fill="none" stroke="#ddd" strokeWidth=".9"><path d="M7 1.500H1v6.300h8.500V6M3 10h4.500M5 8v2M8.300.5v2.300a1.300 1.300 0 0 0 2.600 0V.5zM9.600 4v3" /></svg></TrayItem>
            <TrayItem $mr={9}><svg width="12" height="10" viewBox="0 0 12 10" fill="none" stroke="#ddd" strokeWidth=".9"><path d="M.6 3.500h1.800L5 1.200v7.600L2.400 6.500H.6zM6.600 3.500a2.500 2.500 0 0 1 0 3M8.200 2.200a4.500 4.500 0 0 1 0 5.600M9.800 1a6 6 0 0 1 0 8" /></svg></TrayItem>
            <Clock>
              <Fit w={31.500}>10:51 AM</Fit>
              <Fit w={36}>2/19/2022</Fit>
            </Clock>
            <Count>17</Count>
          </Tray>
        </Taskbar>
      </Screen>
    </>
  );
}
